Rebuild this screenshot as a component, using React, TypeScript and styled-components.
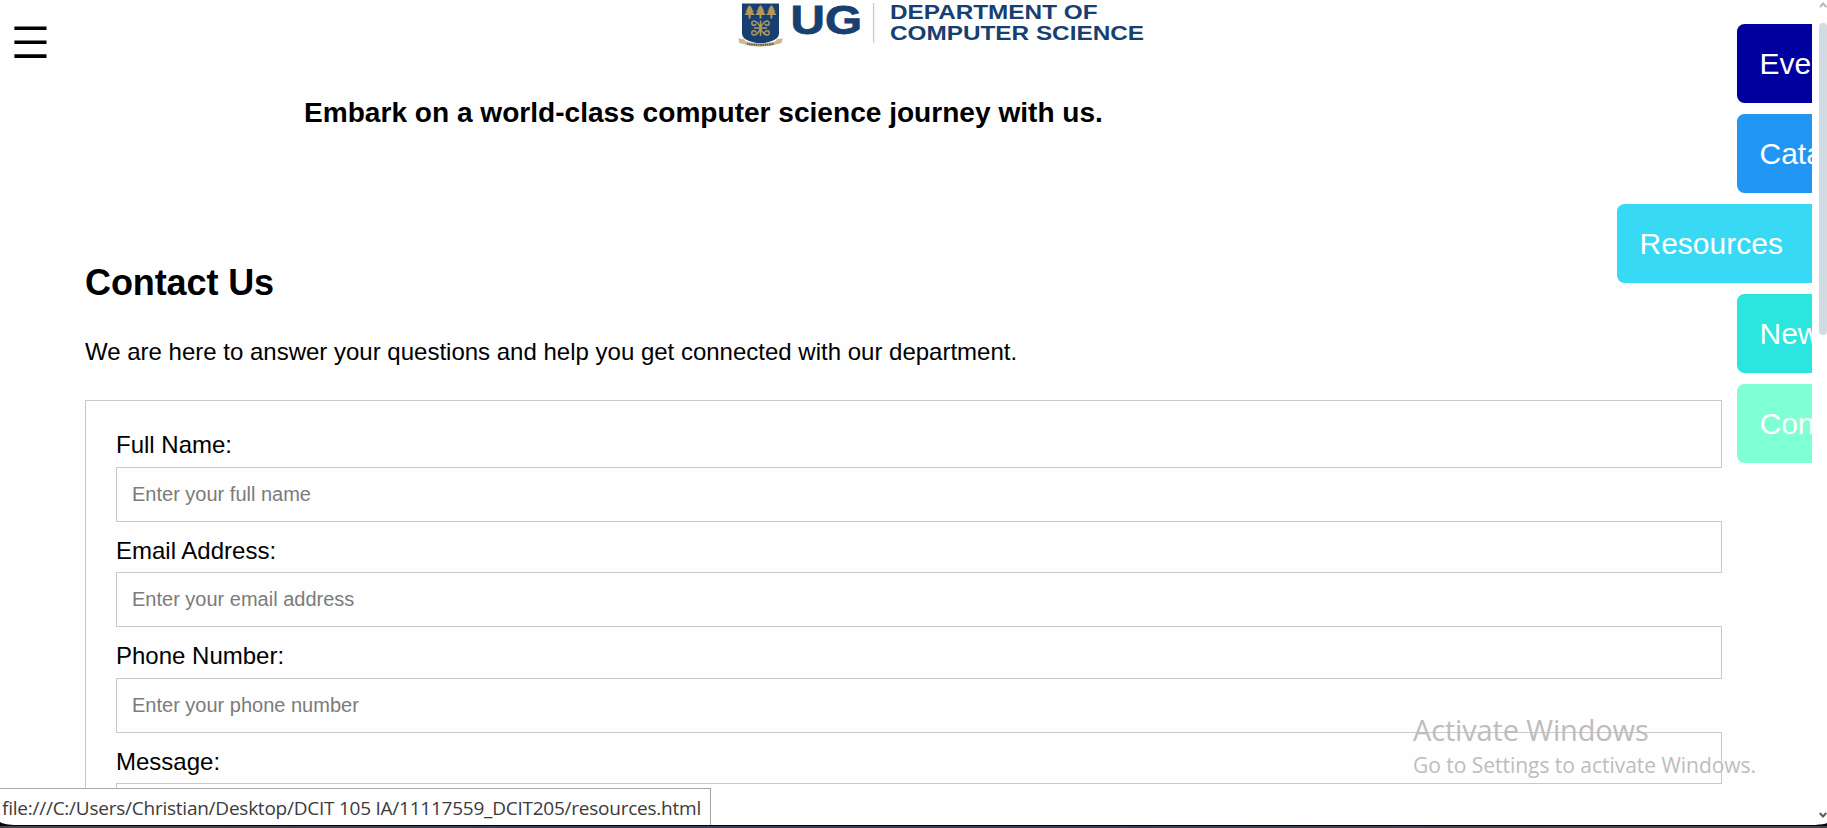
import React from "react";
import styled, { createGlobalStyle } from "styled-components";

const GlobalStyle = createGlobalStyle`
  * { box-sizing: border-box; }
  body {
    margin: 0;
    overflow: hidden;
    background: #fefefe;
    color: #000;
    font-family: "Liberation Sans", Arial, sans-serif;
    font-size: 24px;
  }
`;

const Screen = styled.div`
  display: flex;
  flex-direction: column;
  height: 828px;
  overflow: hidden;
`;

const Viewport = styled.div`
  position: relative;
  display: flex;
  height: 825px;
  overflow: hidden;
`;

const Page = styled.main`
  position: relative;
  flex: 1;
  overflow: hidden;
`;

const MenuButton = styled.button`
  position: absolute;
  top: 26px;
  left: 14px;
  display: flex;
  padding: 0;
  border: 0;
  background: none;
`;

const Header = styled.header`
  height: 97px;
  padding-left: 736px;
`;

const Logo = styled.svg`
  display: block;
`;

const Tagline = styled.h3`
  margin: 0 0 133px;
  padding-left: 304px;
  font-size: 28.08px;
  line-height: 32px;
`;

const Contact = styled.section`
  margin: 0 90px 0 85px;
  overflow: hidden;
`;

const Title = styled.h2`
  margin: 0 0 35px;
  font-size: 36px;
  line-height: 41px;
  letter-spacing: -0.1px;
`;

const Intro = styled.p`
  margin: 0 0 35px;
  line-height: 27px;
`;

const Form = styled.form`
  height: 700px;
  padding: 30.4px 30px 30px;
  border: 1px solid #c9c9c9;
`;

const Field = styled.div`
  display: flex;
  flex-direction: column;
  margin-bottom: 15.3px;
`;

const Label = styled.label`
  margin-bottom: 8.2px;
  line-height: 27px;
`;

const Input = styled.input`
  width: calc(100% + 33px);
  height: 55px;
  padding: 0 15px;
  border: 1px solid #c9c9c9;
  border-radius: 0;
  background: #fefefe;
  font: 20px "Liberation Sans", Arial, sans-serif;
  &::placeholder { color: #7b7b7b; opacity: 1; }
`;

const MessageInput = styled(Input).attrs({ as: "textarea" })`
  height: 120px;
  padding-top: 15px;
  resize: none;
`;

const SideNav = styled.nav`
  position: absolute;
  top: 24px;
  right: 0;
  display: flex;
  flex-direction: column;
  align-items: flex-end;
  gap: 11px;
`;

const SideTab = styled.a<{ $color: string; $open?: boolean }>`
  width: 195px;
  height: 79px;
  margin-right: ${(p) => (p.$open ? 0 : -120)}px;
  padding: 22px 22.5px;
  border-radius: 7.5px 0 0 7.5px;
  background: ${(p) => p.$color};
  color: #fff;
  font-size: 30px;
  line-height: 35px;
  white-space: nowrap;
`;

const Scrollbar = styled.div`
  display: flex;
  flex-direction: column;
  align-items: flex-end;
  justify-content: space-between;
  width: 15px;
  padding: 2px 0 7px;
`;

const Thumb = styled.div`
  width: 8px;
  height: 312px;
  margin: 15px 0 auto;
  border-radius: 4px;
  background: #d0dbe4;
`;

const Arrow = styled.svg`
  display: block;
  flex: none;
`;

const StatusBar = styled.div`
  position: absolute;
  left: 0;
  bottom: 0;
  width: 711px;
  height: 37px;
  padding-left: 2px;
  border: solid #a6a6a6;
  border-width: 1px 1px 0 0;
  background: #fefefe;
  color: #3b3b3b;
  font: 19px/38px "Open Sans", "Noto Sans", sans-serif;
  letter-spacing: -0.24px;
  white-space: nowrap;
`;

const Watermark = styled.div`
  position: absolute;
  top: 714px;
  left: 1413px;
  color: #bdbdbd;
  font-family: "Open Sans", "Noto Sans", sans-serif;
  white-space: nowrap;
`;

const WatermarkTitle = styled.div`
  margin-bottom: 3px;
  font-size: 29px;
  line-height: 32px;
  letter-spacing: -0.15px;
`;

const WatermarkText = styled.div`
  font-size: 21px;
  line-height: 32px;
  letter-spacing: -0.03px;
`;

const Taskbar = styled.div`
  height: 3px;
  border-top: 1px solid #04051a;
  background: linear-gradient(90deg, #45434a 0, #45434a 12%, #3b3f5e 28%, #3b3f5e 60%, #45434a 85%);
`;

const Corner = styled.svg<{ $side: "left" | "right" }>`
  position: absolute;
  bottom: 0;
  ${(p) => p.$side}: 0;
`;

const tabs = [
  { name: "Events", color: "#00009f" },
  { name: "Catalogue", color: "#2196f3" },
  { name: "Resources", color: "#38d9f5", open: true },
  { name: "News", color: "#2ae6df" },
  { name: "Contact", color: "#7fffd4" },
];

const fields = [
  { label: "Full Name:", hint: "Enter your full name" },
  { label: "Email Address:", hint: "Enter your email address" },
  { label: "Phone Number:", hint: "Enter your phone number" },
];

const NAVY = "#173f70";
const GOLD = "#b4985f";

function Tree({ x }: { x: number }) {
  return (
    <path
      transform={`translate(${x} 5)`}
      fill={GOLD}
      d="M0 0 3 3.8H1.8L4.4 6.6H2.6L5.2 10H1V13.4H-1V10H-5.2L-2.6 6.6H-4.4L-1.8 3.8H-3Z"
    />
  );
}

function DepartmentLogo() {
  return (
    <Logo width="412" height="50" viewBox="736 0 412 50">
      <path fill={NAVY} d="M742 3.6H779V33C779 39 773 41.5 760.5 44 748 41.5 742 39 742 33Z" />
      <Tree x={749.6} />
      <Tree x={760.5} />
      <Tree x={771.4} />
      <g fill="none" stroke={GOLD} strokeWidth="1.5">
        <path d="M760.5 20.5V36M754 28H767" />
        <path d="M760.5 28C758 20.500 751.800 19.500 751.800 23.200 751.800 26 756 26 756 23.500M760.5 28C763 20.500 769.200 19.500 769.200 23.200 769.200 26 765 26 765 23.500" />
        <path d="M760.5 28C758 35.500 751.800 36.800 751.800 33 751.800 30.200 756 30.200 756 32.700M760.5 28C763 35.500 769.200 36.800 769.200 33 769.200 30.200 765 30.200 765 32.700" />
      </g>
      <path
        fill="#cdb98f"
        d="M738.3 38.300 744 39.300 745.500 41.200C753 43.700 768 43.700 775.500 41.200L777 39.300 782.700 38.300 781.600 43 777.500 44C768 47.500 753 47.500 743.500 44L739.400 43Z"
      />
      <path fill="none" stroke="#5d5a4e" strokeWidth="1.8" strokeDasharray="1.6 .6" d="M747 43.600C754 45.400 767 45.400 774 43.600" />
      <g fill={NAVY} fontFamily="'Liberation Sans', Arial, sans-serif" fontWeight="700">
        <text x="790.500" y="33.500" fontSize="41.500" textLength="71.500" lengthAdjust="spacingAndGlyphs" stroke={NAVY} strokeWidth=".8">
          UG
        </text>
        <text x="890" y="19.200" fontSize="20.500" textLength="207.500" lengthAdjust="spacingAndGlyphs">
          DEPARTMENT OF
        </text>
        <text x="890" y="40.300" fontSize="20.500" textLength="254" lengthAdjust="spacingAndGlyphs">
          COMPUTER SCIENCE
        </text>
      </g>
      <path fill="#d8c6a3" d="M873 3H874.200V42.500H873Z" />
    </Logo>
  );
}

export default function App() {
  return (
    <Screen>
      <GlobalStyle />
      <Viewport>
        <Page>
          <Header>
            <DepartmentLogo />
          </Header>
          <MenuButton type="button" aria-label="Menu">
            <svg width="34" height="33" viewBox="0 0 34 33">
              <path d="M.4.5H32.500V4H.4ZM.4 14.500H32.500V18H.4ZM.4 28.300H32.500V32H.4Z" />
            </svg>
          </MenuButton>
          <Tagline>Embark on a world-class computer science journey with us.</Tagline>
          <Contact>
            <Title>Contact Us</Title>
            <Intro>We are here to answer your questions and help you get connected with our department.</Intro>
            <Form>
              {fields.map((f) => (
                <Field key={f.label}>
                  <Label>{f.label}</Label>
                  <Input placeholder={f.hint} />
                </Field>
              ))}
              <Field>
                <Label>Message:</Label>
                <MessageInput />
              </Field>
            </Form>
          </Contact>
          <SideNav>
            {tabs.map((t) => (
              <SideTab key={t.name} $color={t.color} $open={t.open}>
                {t.name}
              </SideTab>
            ))}
          </SideNav>
        </Page>
        <Scrollbar>
          <Arrow width="8" height="6" viewBox="0 0 8 6">
            <path d="M1 5 4.200 1.500 7.400 5" fill="none" stroke="#b8b8b8" strokeWidth="2" />
          </Arrow>
          <Thumb />
          <Arrow width="8" height="6" viewBox="0 0 8 6">
            <path d="M.8 1 4 4.500 7.200 1" fill="none" stroke="#5c5c5c" strokeWidth="2" />
          </Arrow>
        </Scrollbar>
        <StatusBar>file:///C:/Users/Christian/Desktop/DCIT 105 IA/11117559_DCIT205/resources.html</StatusBar>
        <Watermark>
          <WatermarkTitle>Activate Windows</WatermarkTitle>
          <WatermarkText>Go to Settings to activate Windows.</WatermarkText>
        </Watermark>
        <Corner $side="left" width="14" height="3" viewBox="0 0 14 3">
          <path fill="#04051a" d="M0 0C2 1.500 6 2.300 14 3H0Z" />
        </Corner>
        <Corner $side="right" width="12" height="2" viewBox="0 0 12 2">
          <path fill="#04051a" d="M12 0C10 1 6 1.500 0 2H12Z" />
        </Corner>
      </Viewport>
      <Taskbar />
    </Screen>
  );
}
